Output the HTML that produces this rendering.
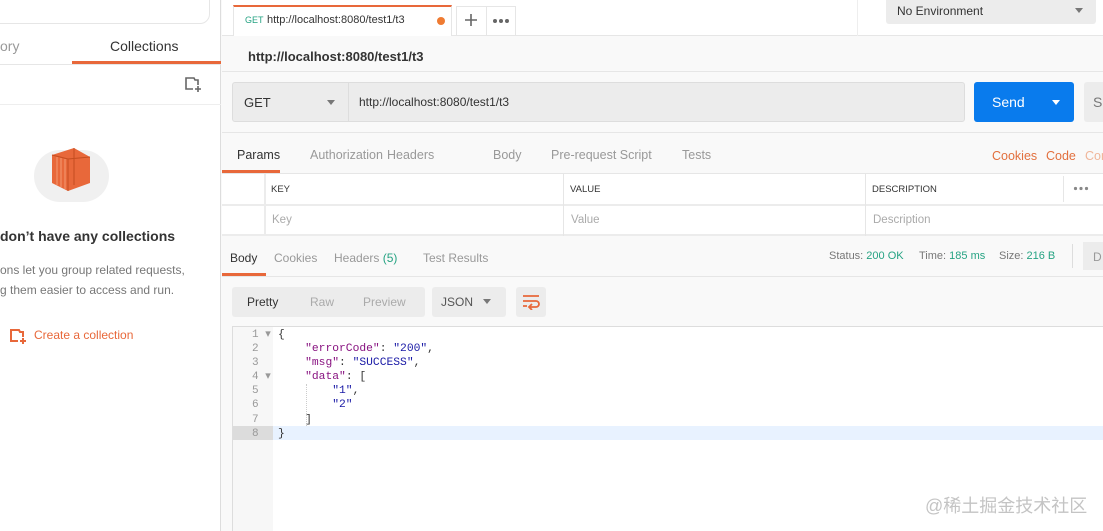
<!DOCTYPE html>
<html><head><meta charset="utf-8"><style>
*{box-sizing:border-box;margin:0;padding:0}
html,body{width:1103px;height:531px;overflow:hidden}
body{background:#f9f9f9;font-family:"Liberation Sans","Noto Sans CJK SC",sans-serif;position:relative;color:#505050}
.a{position:absolute}
.t{white-space:nowrap}
</style></head><body>
<!-- sidebar -->
<div class="a" style="left:0;top:0;width:221px;height:531px;background:#fff;border-right:1px solid #ddd"></div>
<div class="a" style="left:-20px;top:-10px;width:230px;height:34px;border:1px solid #e6e6e6;border-radius:10px;background:#fff"></div>
<div class="a t" style="left:0;top:38px;font-size:14px;color:#999">ory</div>
<div class="a t" style="left:110px;top:38px;font-size:14px;color:#333">Collections</div>
<div class="a" style="left:72px;top:61px;width:149px;height:3px;background:#e8683a"></div>
<div class="a" style="left:0;top:64px;width:221px;height:1px;background:#e6e6e6"></div>
<svg class="a" style="left:184px;top:77px" width="18" height="16" viewBox="0 0 18 16"><path d="M9 12H2V1h8l1 2h3v5" fill="none" stroke="#666" stroke-width="1.6"/><path d="M14 9v6M11 12h6" stroke="#666" stroke-width="1.6"/></svg>
<div class="a" style="left:0;top:104px;width:221px;height:1px;background:#eee"></div>
<div class="a" style="left:34px;top:150px;width:75px;height:52px;border-radius:30px;background:#f0f0f0"></div>
<svg class="a" style="left:50px;top:145px" width="42" height="50" viewBox="0 0 42 50"><path d="M2 10 L24 3 L40 12 L40 38 L18 46 L2 38Z" fill="#e8683a"/><path d="M24 3V40M18 46V14M2 10L18 14L40 12" stroke="#c44d20" fill="none"/><path d="M7 12V40M11 13V42M15 14V44" stroke="#f39a72"/></svg>
<div class="a t" style="left:0;top:228px;font-size:14px;font-weight:bold;color:#333">don’t have any collections</div>
<div class="a t" style="left:0;top:263px;font-size:12px;color:#777">ons let you group related requests,</div>
<div class="a t" style="left:0;top:283px;font-size:12px;color:#777">g them easier to access and run.</div>
<svg class="a" style="left:9px;top:329px" width="18" height="16" viewBox="0 0 18 16"><path d="M9 12H2V1h8l1 2h3v5" fill="none" stroke="#e8683a" stroke-width="2"/><path d="M14 9v6M11 12h6" stroke="#e8683a" stroke-width="2"/></svg>
<div class="a t" style="left:34px;top:328px;font-size:12px;color:#e8683a">Create a collection</div>
<!-- top bar -->
<div class="a" style="left:222px;top:0;width:881px;height:36px;background:#fff;border-bottom:1px solid #e6e6e6"></div>
<div class="a" style="left:233px;top:5px;width:219px;height:31px;background:#fff;border:1px solid #e6e6e6;border-top:2px solid #e8683a;border-bottom:none"></div>
<div class="a t" style="left:245px;top:15px;font-size:9px;color:#26a383">GET</div>
<div class="a t" style="left:267px;top:14px;font-size:11px;color:#333">http://localhost:8080/test1/t3</div>
<div class="a" style="left:437px;top:17px;width:8px;height:8px;border-radius:50%;background:#ef7b32"></div>
<div class="a" style="left:456px;top:6px;width:60px;height:30px;border:1px solid #e6e6e6;border-bottom:none"></div>
<div class="a" style="left:486px;top:6px;width:1px;height:30px;background:#e6e6e6"></div>
<svg class="a" style="left:464px;top:13px" width="14" height="14"><path d="M7 1v12M1 7h12" stroke="#666" stroke-width="1.6"/></svg>
<svg class="a" style="left:492px;top:18px" width="18" height="6"><circle cx="3" cy="3" r="2" fill="#666"/><circle cx="9" cy="3" r="2" fill="#666"/><circle cx="15" cy="3" r="2" fill="#666"/></svg>
<div class="a" style="left:857px;top:0;width:1px;height:36px;background:#eee"></div>
<div class="a" style="left:886px;top:0;width:210px;height:24px;background:#ececec;border-radius:0 0 3px 3px"></div>
<div class="a t" style="left:897px;top:4px;font-size:12px;color:#333">No Environment</div>
<div class="a" style="left:1075px;top:8px;border:4px solid transparent;border-top:5px solid #777"></div>
<!-- title -->
<div class="a t" style="left:248px;top:49px;font-size:13px;font-weight:bold;color:#333">http://localhost:8080/test1/t3</div>
<div class="a" style="left:222px;top:71px;width:881px;height:1px;background:#e6e6e6"></div>
<!-- url row -->
<div class="a" style="left:232px;top:82px;width:733px;height:40px;background:#ececec;border:1px solid #ddd;border-radius:3px"></div>
<div class="a" style="left:348px;top:83px;width:1px;height:38px;background:#ddd"></div>
<div class="a t" style="left:244px;top:95px;font-size:13px;color:#333">GET</div>
<div class="a" style="left:327px;top:100px;border:4px solid transparent;border-top:5px solid #777"></div>
<div class="a t" style="left:359px;top:95px;font-size:12px;color:#333">http://localhost:8080/test1/t3</div>
<div class="a" style="left:974px;top:82px;width:100px;height:40px;background:#097bed;border-radius:3px"></div>
<div class="a t" style="left:992px;top:94px;font-size:14px;color:#fff">Send</div>
<div class="a" style="left:1052px;top:100px;border:4px solid transparent;border-top:5px solid #fff"></div>
<div class="a" style="left:1084px;top:82px;width:30px;height:40px;background:#ececec;border-radius:3px"></div>
<div class="a t" style="left:1093px;top:94px;font-size:14px;color:#777">Sa</div>
<div class="a" style="left:222px;top:132px;width:881px;height:1px;background:#e6e6e6"></div>
<!-- request tabs -->
<div class="a t" style="left:237px;top:148px;font-size:12.5px;color:#333">Params</div>
<div class="a t" style="left:310px;top:148px;font-size:12.5px;color:#999">Authorization</div>
<div class="a t" style="left:387px;top:148px;font-size:12.5px;color:#999">Headers</div>
<div class="a t" style="left:493px;top:148px;font-size:12.5px;color:#999">Body</div>
<div class="a t" style="left:551px;top:148px;font-size:12.5px;color:#999">Pre-request Script</div>
<div class="a t" style="left:682px;top:148px;font-size:12.5px;color:#999">Tests</div>
<div class="a t" style="left:992px;top:149px;font-size:12.5px;color:#e2703e">Cookies</div>
<div class="a t" style="left:1046px;top:149px;font-size:12.5px;color:#e2703e">Code</div>
<div class="a t" style="left:1085px;top:149px;font-size:12.5px;color:#f0b69a">Com</div>
<div class="a" style="left:222px;top:170px;width:58px;height:3px;background:#e8683a"></div>
<div class="a" style="left:222px;top:173px;width:881px;height:1px;background:#e6e6e6"></div>
<!-- table -->
<div class="a" style="left:222px;top:174px;width:881px;height:62px;background:#fff"></div>
<div class="a" style="left:222px;top:204px;width:881px;height:2px;background:#ececec"></div>
<div class="a" style="left:222px;top:234px;width:881px;height:2px;background:#ececec"></div>
<div class="a" style="left:264px;top:174px;width:2px;height:62px;background:#ececec"></div>
<div class="a" style="left:563px;top:174px;width:1px;height:62px;background:#e6e6e6"></div>
<div class="a" style="left:865px;top:174px;width:1px;height:62px;background:#e6e6e6"></div>
<div class="a" style="left:1063px;top:176px;width:1px;height:26px;background:#e6e6e6"></div>
<div class="a t" style="left:271px;top:184px;font-size:9.5px;color:#333">KEY</div>
<div class="a t" style="left:570px;top:184px;font-size:9.5px;color:#333">VALUE</div>
<div class="a t" style="left:872px;top:184px;font-size:9.5px;color:#333">DESCRIPTION</div>
<svg class="a" style="left:1073px;top:186px" width="16" height="5"><circle cx="2.5" cy="2.5" r="1.6" fill="#888"/><circle cx="8" cy="2.5" r="1.6" fill="#888"/><circle cx="13.5" cy="2.5" r="1.6" fill="#888"/></svg>
<div class="a t" style="left:272px;top:214px;font-size:11.5px;color:#aaa">Key</div>
<div class="a t" style="left:571px;top:214px;font-size:11.5px;color:#aaa">Value</div>
<div class="a t" style="left:873px;top:214px;font-size:11.5px;color:#aaa">Description</div>
<!-- response tabs -->
<div class="a t" style="left:230px;top:251px;font-size:12px;color:#333">Body</div>
<div class="a t" style="left:274px;top:251px;font-size:12px;color:#999">Cookies</div>
<div class="a t" style="left:334px;top:251px;font-size:12px;color:#999">Headers <span style="color:#26a383">(5)</span></div>
<div class="a t" style="left:423px;top:251px;font-size:12px;color:#999">Test Results</div>
<div class="a t" style="left:829px;top:250px;font-size:11px;color:#777">Status: <span style="color:#26a383">200 OK</span></div>
<div class="a t" style="left:919px;top:250px;font-size:11px;color:#777">Time: <span style="color:#26a383">185 ms</span></div>
<div class="a t" style="left:999px;top:250px;font-size:11px;color:#777">Size: <span style="color:#26a383">216 B</span></div>
<div class="a" style="left:1072px;top:244px;width:1px;height:24px;background:#ddd"></div>
<div class="a" style="left:1083px;top:242px;width:25px;height:28px;background:#ececec"></div>
<div class="a t" style="left:1093px;top:250px;font-size:12px;color:#999">D</div>
<div class="a" style="left:222px;top:273px;width:44px;height:3px;background:#e8683a"></div>
<div class="a" style="left:222px;top:276px;width:881px;height:1px;background:#e6e6e6"></div>
<!-- pretty row -->
<div class="a" style="left:232px;top:287px;width:193px;height:30px;background:#ececec;border-radius:3px"></div>
<div class="a t" style="left:247px;top:295px;font-size:12px;color:#333">Pretty</div>
<div class="a t" style="left:310px;top:295px;font-size:12px;color:#aaa">Raw</div>
<div class="a t" style="left:363px;top:295px;font-size:12px;color:#aaa">Preview</div>
<div class="a" style="left:432px;top:287px;width:74px;height:30px;background:#ececec;border-radius:3px"></div>
<div class="a t" style="left:441px;top:295px;font-size:12px;color:#555">JSON</div>
<div class="a" style="left:483px;top:299px;border:4px solid transparent;border-top:5px solid #777"></div>
<div class="a" style="left:516px;top:287px;width:30px;height:30px;background:#ececec;border-radius:3px"></div>
<svg class="a" style="left:522px;top:294px" width="18" height="16" viewBox="0 0 18 16"><path d="M1 2h16M1 7h13a3 3 0 0 1 0 6H8M1 12h4M10 10l-3 3 3 3" fill="none" stroke="#e8683a" stroke-width="1.8"/></svg>
<!-- editor -->
<div class="a" style="left:232px;top:326px;width:880px;height:210px;background:#fff;border:1px solid #ddd"></div>
<div class="a" style="left:233px;top:327px;width:40px;height:210px;background:#f7f7f7"></div>
<div class="a" style="left:233px;top:426px;width:870px;height:14px;background:#e8f2ff"></div>
<div class="a" style="left:233px;top:426px;width:40px;height:14px;background:#dcdcdc"></div>
<div class="a" style="left:306px;top:384px;height:42px;border-left:1px dotted #ccc"></div>
<pre class="a" style="left:252px;top:328px;font-family:'Liberation Mono',monospace;font-size:11px;line-height:14.1px;color:#999">1 ▾
2
3
4 ▾
5
6
7
8</pre>
<pre class="a" style="left:278px;top:328px;font-family:'Liberation Mono',monospace;font-size:11.3px;line-height:14.1px;color:#333">{
    <span style="color:#881280">"errorCode"</span>: <span style="color:#1a1aa6">"200"</span>,
    <span style="color:#881280">"msg"</span>: <span style="color:#1a1aa6">"SUCCESS"</span>,
    <span style="color:#881280">"data"</span>: [
        <span style="color:#1a1aa6">"1"</span>,
        <span style="color:#1a1aa6">"2"</span>
    ]
}</pre>
<div class="a t" style="left:925px;top:492px;font-size:18px;color:#c4c4c4">@稀土掘金技术社区</div>
</body></html>
